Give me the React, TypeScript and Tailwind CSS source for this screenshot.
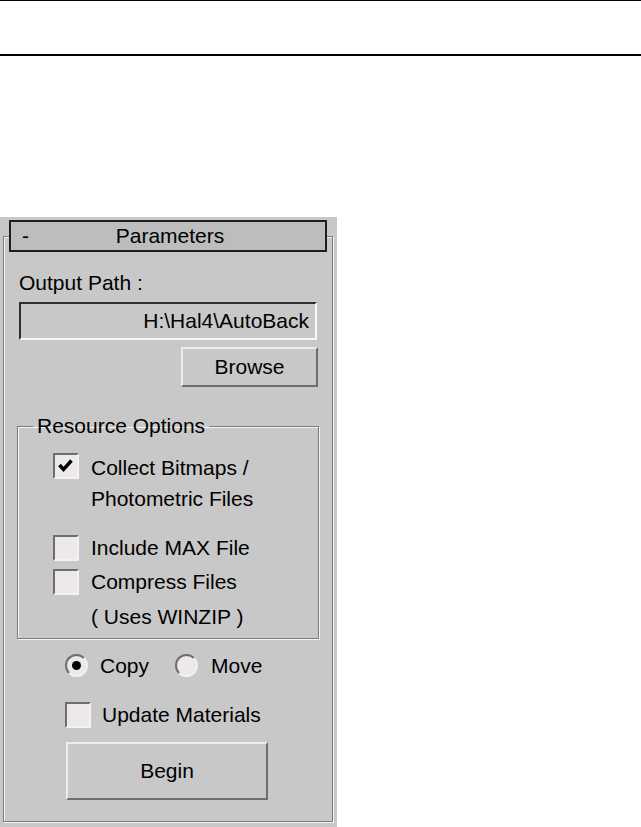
import React from "react";

function CheckBox({ checked = false }: { checked?: boolean }) {
  return (
    <div className="w-[26px] h-[26px] shrink-0 border-2 border-t-[#6e6e6e] border-l-[#6e6e6e] border-b-[#f2f2f2] border-r-[#f2f2f2] bg-[#ece8ec] flex items-center justify-center">
      {checked && (
        <svg width="22" height="22" viewBox="0 0 22 22">
          <path d="M4.5 10 L8.5 14.5 L16.5 5.5" fill="none" stroke="#000" strokeWidth="3.4" strokeLinecap="butt" strokeLinejoin="miter" />
        </svg>
      )}
    </div>
  );
}

function Radio({ checked = false }: { checked?: boolean }) {
  return (
    <div className="w-[23px] h-[23px] shrink-0 rounded-full border-2 border-t-[#6e6e6e] border-l-[#6e6e6e] border-b-[#f0f0f0] border-r-[#f0f0f0] bg-[#ece8ec] flex items-center justify-center">
      {checked && <div className="w-[9px] h-[9px] rounded-full bg-black" />}
    </div>
  );
}

export default function App() {
  return (
    <div
      className="w-[641px] h-[827px] bg-white flex flex-col text-black text-[21px] leading-[24px]"
      style={{ fontFamily: '"Liberation Sans", Arial, sans-serif' }}
    >
      <div className="h-[1px] bg-black" />
      <div className="h-[53px]" />
      <div className="h-[2px] bg-black" />
      <div className="h-[161px]" />
      <div className="w-[337px] h-[610px] bg-[#c8c8c8] pt-[19px] pl-[3px] pr-[4px] pb-[5px]">
        <div className="h-full border border-[#7c7c7c] shadow-[inset_1px_1px_0_#f4f4f4,1px_1px_0_#f4f4f4] flex flex-col">
          <div className="-mt-[17px] ml-[5px] w-[318px] h-[32px] shrink-0 border-2 border-[#1e1e1e] bg-[#bdbdbd] flex items-center">
            <span className="w-[26px] pl-[11px]">-</span>
            <span className="flex-1 text-center pl-[4px]">Parameters</span>
            <span className="w-[26px]" />
          </div>
          <div className="pl-[13px] flex flex-col">
            <div className="mt-[19px] ml-[2px]">Output Path :</div>
            <div className="mt-[7px] ml-[2px] w-[298px] h-[38px] border-2 border-t-[#303030] border-l-[#303030] border-b-[#f8f8f8] border-r-[#f8f8f8] flex items-center justify-end pr-[6px]">
              H:\Hal4\AutoBack
            </div>
            <button className="mt-[7px] ml-[164px] w-[137px] h-[40px] border-2 border-t-[#ececec] border-l-[#ececec] border-b-[#6e6e6e] border-r-[#6e6e6e] flex items-center justify-center">
              Browse
            </button>
            <fieldset className="mt-[27px] w-[302px] border border-[#7c7c7c] shadow-[inset_1px_1px_0_#f4f4f4,1px_1px_0_#f4f4f4]">
              <legend className="ml-[15px] px-[4px] leading-[24px]">Resource Options</legend>
              <div className="pl-[35px] pb-[9px]">
                <div className="mt-[14px] flex items-start">
                  <div className="mt-[1px]">
                    <CheckBox checked />
                  </div>
                  <div className="ml-[12px] leading-[31px]">
                    <div>Collect Bitmaps /</div>
                    <div>Photometric Files</div>
                  </div>
                </div>
                <div className="mt-[21px] flex items-center h-[26px]">
                  <CheckBox />
                  <span className="ml-[12px]">Include MAX File</span>
                </div>
                <div className="mt-[8px] flex items-center h-[26px]">
                  <CheckBox />
                  <span className="ml-[12px]">Compress Files</span>
                </div>
                <div className="mt-[10px] ml-[38px]">( Uses WINZIP )</div>
              </div>
            </fieldset>
            <div className="mt-[15px] ml-[48px] flex items-center h-[23px]">
              <Radio checked />
              <span className="ml-[12px]">Copy</span>
              <div className="ml-[26px]">
                <Radio />
              </div>
              <span className="ml-[13px]">Move</span>
            </div>
            <div className="mt-[25px] ml-[48px] flex items-center h-[26px]">
              <CheckBox />
              <span className="ml-[11px]">Update Materials</span>
            </div>
            <button className="mt-[14px] ml-[49px] w-[202px] h-[58px] border-2 border-t-[#ececec] border-l-[#ececec] border-b-[#6e6e6e] border-r-[#6e6e6e] flex items-center justify-center">
              Begin
            </button>
          </div>
        </div>
      </div>
    </div>
  );
}
